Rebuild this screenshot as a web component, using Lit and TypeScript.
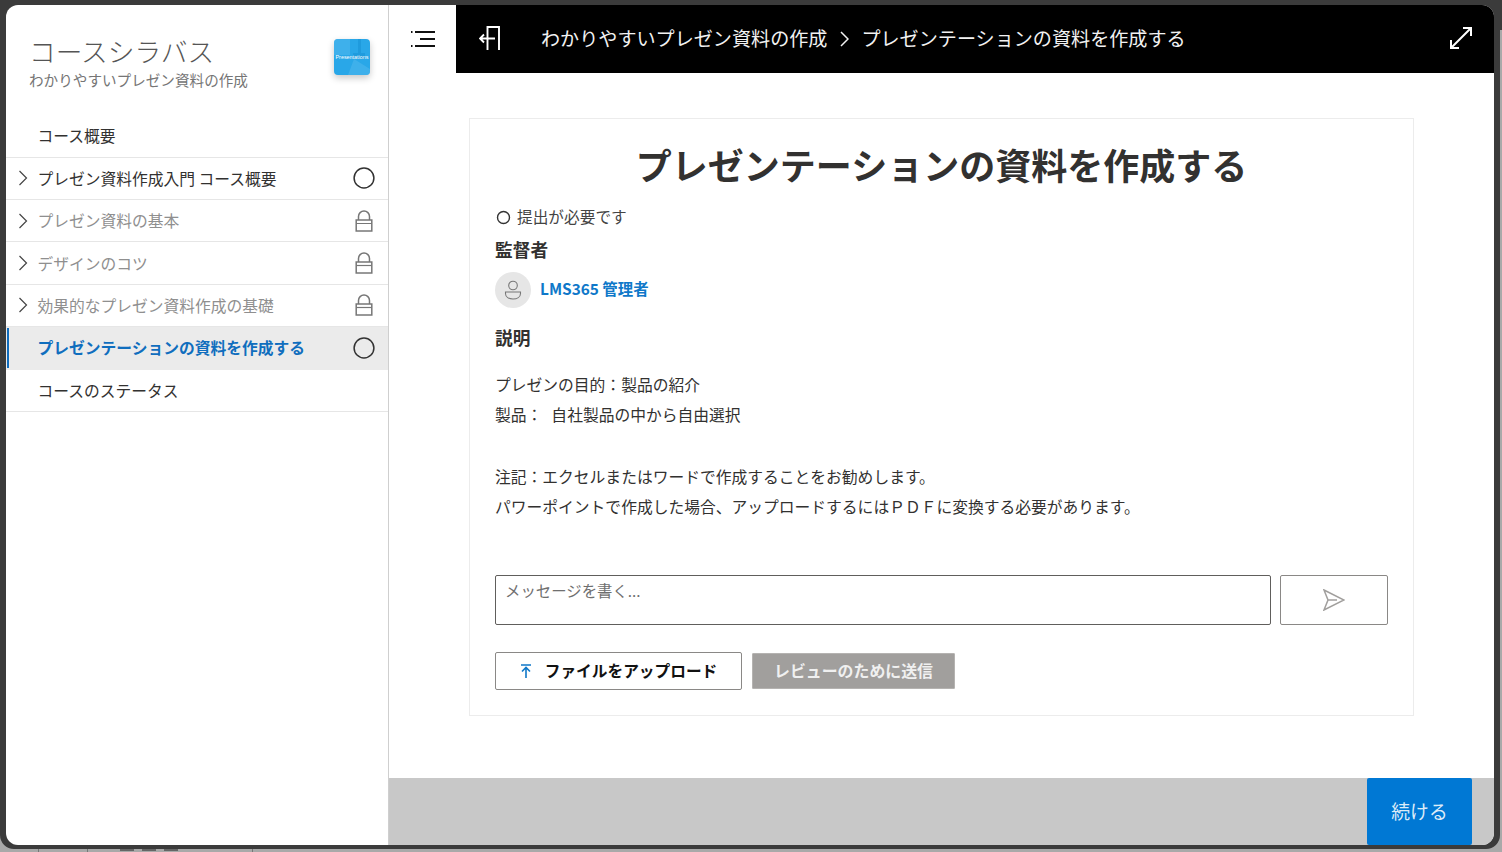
import { LitElement, html, css, svg } from "lit";
import { customElement } from "lit/decorators.js";

const chevron = html`<svg class="chev" width="10" height="16" viewBox="0 0 10 16"><path d="M1.5 1 L8.5 8 L1.5 15" fill="none" stroke="#444" stroke-width="1.2"/></svg>`;
const circle = html`<svg class="state" width="22" height="22" viewBox="0 0 22 22"><circle cx="11" cy="11" r="9.9" fill="none" stroke="#333" stroke-width="1.5"/></svg>`;
const lock = html`<svg class="state" width="22" height="22" viewBox="0 0 22 22"><path d="M5.5 10 V6.5 a5.5 5.5 0 0 1 11 0 V10" fill="none" stroke="#777" stroke-width="1.5"/><rect x="3.2" y="10" width="15.6" height="11" fill="none" stroke="#777" stroke-width="1.5"/><path d="M3.2 13.5 H18.8" stroke="#777" stroke-width="1.2"/></svg>`;

@customElement("app-root")
export class AppRoot extends LitElement {
  static styles = css`
    :host {
      display: block;
      width: 1502px;
      height: 852px;
      overflow: hidden;
      background: linear-gradient(#3b3b3b 0 30px, #a9a9a9 30px);
      font-family: "Noto Sans CJK JP", "Noto Sans", sans-serif;
      color: #323130;
    }
    * { box-sizing: border-box; }
    .frame {
      width: 1500px;
      height: 849px;
      border: solid #3b3b3b;
      border-width: 5px 6px 4px 6px;
      border-radius: 0 0 14px 14px;
      background: #3b3b3b;
    }
    .under {
      height: 3px;
      overflow: hidden;
      display: flex;
      padding-left: 38px;
    }
    .under span { border-left: 1px solid #777; height: 3px; flex: none; }
    .u1 { width: 49px; }
    .u2 { width: 165px; display: flex; gap: 8px; padding-left: 32px; }
    .u2 i { width: 14px; height: 2px; background: #666; }
    .u3 { width: 900px; }
    .win {
      width: 100%;
      height: 100%;
      border-radius: 12px;
      overflow: hidden;
      background: #fff;
      display: flex;
    }
    .side {
      width: 383px;
      flex: none;
      border-right: 1px solid #cfcfcf;
      display: flex;
      flex-direction: column;
    }
    .head {
      height: 110.2px;
      flex: none;
      padding: 27px 18px 0 23px;
      display: flex;
      justify-content: space-between;
    }
    .head h1 {
      margin: 0;
      font-size: 26.7px;
      line-height: 38px;
      font-weight: 300;
      color: #555;
    }
    .head p {
      margin: 0;
      font-size: 14.6px;
      line-height: 20px;
      color: #757575;
    }
    .thumb {
      width: 36px;
      height: 36px;
      margin-top: 7px;
      border-radius: 4px;
      background: #29a7e8;
      box-shadow: 0 3px 7px rgba(0,0,0,.22);
      overflow: hidden;
      flex: none;
    }
    .thumb svg { display: block; }
    .row {
      height: 42.4px;
      flex: none;
      border-bottom: 1px solid #e6e6e6;
      display: flex;
      align-items: center;
      padding: 0 13px 0 12px;
      font-size: 15.75px;
      color: #323130;
      position: relative;
      white-space: nowrap;
    }
    .row .chev { flex: none; margin-right: 9.5px; }
    .row .lbl { flex: 1; }
    .row.plain { padding-left: 31.5px; }
    .row.off .lbl { color: #8f8f8f; }
    .row.active {
      background: #ebebeb;
      border-bottom-color: #ebebeb;
      padding-left: 31.5px;
      color: #106ebe;
      font-weight: 700;
    }
    .row.active::before {
      content: "";
      position: absolute;
      left: 1px;
      top: 1px;
      bottom: 1px;
      width: 2px;
      background: #0f6cbd;
    }
    .main {
      flex: 1;
      min-width: 0;
      display: flex;
      flex-direction: column;
    }
    .top { height: 68px; flex: none; display: flex; }
    .burger {
      width: 67px;
      flex: none;
      display: flex;
      align-items: center;
      justify-content: center;
      padding-bottom: 1px;
    }
    .bar {
      flex: 1;
      background: #000;
      color: #f2f2f2;
      display: flex;
      align-items: center;
      padding: 0 22px 3px 23px;
      font-size: 19.1px;
      white-space: nowrap;
    }
    .crumbs { flex: 1; margin-left: 41px; display: flex; align-items: center; }
    .crumbs svg { margin: 2px 12px 0 13px; }
    .body {
      flex: 1;
      min-height: 0;
      padding: 45px 80px 0 80px;
    }
    .card {
      height: 598px;
      border: 1px solid #ececec;
      padding: 0 25px;
    }
    .card h2 {
      margin: 22px 0 0;
      font-size: 36px;
      line-height: 46px;
      font-weight: 700;
      text-align: center;
      color: #323130;
      white-space: nowrap;
    }
    .req {
      margin-top: 18px;
      display: flex;
      align-items: center;
      font-size: 15.7px;
      line-height: 24px;
      color: #444;
      padding-left: 1px;
    }
    .req svg { margin-right: 6px; }
    h3 {
      margin: 0;
      font-size: 17.7px;
      line-height: 26px;
      font-weight: 700;
      color: #323130;
    }
    .sup { margin-top: 7px; }
    .who {
      margin-top: 10px;
      display: flex;
      align-items: center;
      gap: 9px;
      font-size: 15.4px;
      font-weight: 700;
      color: #0f78c9;
    }
    .who span { padding-bottom: 4px; }
    .avatar {
      width: 36px;
      height: 36px;
      border-radius: 50%;
      background: #e6e6e6;
      display: flex;
      align-items: center;
      justify-content: center;
    }
    .desc { margin-top: 16px; }
    .text {
      margin-top: 19.5px;
      font-size: 15.78px;
      line-height: 30.7px;
      word-spacing: 1px;
      color: #323130;
      white-space: pre;
    }
    .send {
      margin-top: 51.5px;
      display: flex;
      gap: 9px;
    }
    .input {
      width: 776px;
      height: 50px;
      border: 1px solid #605e5c;
      border-radius: 2px;
      padding: 2px 9px;
      font-size: 15.4px;
      line-height: 24px;
      color: #6f6f6f;
    }
    .go {
      width: 108px;
      height: 50px;
      border: 1px solid #8a8886;
      border-radius: 2px;
      display: flex;
      align-items: center;
      justify-content: center;
    }
    .btns {
      margin-top: 27px;
      display: flex;
      align-items: center;
      gap: 10px;
    }
    .up {
      width: 247px;
      height: 38px;
      border: 1px solid #8a8886;
      border-radius: 2px;
      display: flex;
      align-items: center;
      justify-content: center;
      gap: 13px;
      font-size: 15.7px;
      font-weight: 700;
      color: #111;
    }
    .sub {
      width: 203px;
      height: 36px;
      background: #a19f9d;
      border: 1px solid #b5b3b1;
      border-radius: 1px;
      display: flex;
      align-items: center;
      justify-content: center;
      font-size: 15.9px;
      font-weight: 700;
      color: #f0f0f0;
    }
    .foot {
      height: 67px;
      flex: none;
      background: #c8c8c8;
      display: flex;
      justify-content: flex-end;
      padding-right: 22px;
    }
    .next {
      width: 105px;
      background: #0078d4;
      border-radius: 2px;
      color: #dcecf8;
      font-size: 18.8px;
      display: flex;
      align-items: center;
      justify-content: center;
      padding-bottom: 2px;
    }
  `;

  render() {
    return html`
      <div class="frame"><div class="win">
        <aside class="side">
          <div class="head">
            <div>
              <h1>コースシラバス</h1>
              <p>わかりやすいプレゼン資料の作成</p>
            </div>
            <div class="thumb">
              <svg width="36" height="36" viewBox="0 0 36 36">
                ${svg`<path d="M0 0 H16 V16 H0Z M20 20 L36 30 V36 H14Z" fill="#4cb6ec" opacity=".6"/>
                <path d="M24 0 h3 v14 h4 v6 H19 v-6 h5z" fill="#1b95d8" opacity=".7"/>
                <text x="18" y="19.5" font-size="5.4" fill="#fff" text-anchor="middle" font-family="Liberation Sans">Presentations</text>`}
              </svg>
            </div>
          </div>
          <div class="row plain"><span class="lbl">コース概要</span></div>
          <div class="row">${chevron}<span class="lbl">プレゼン資料作成入門 コース概要</span>${circle}</div>
          <div class="row off">${chevron}<span class="lbl">プレゼン資料の基本</span>${lock}</div>
          <div class="row off">${chevron}<span class="lbl">デザインのコツ</span>${lock}</div>
          <div class="row off">${chevron}<span class="lbl">効果的なプレゼン資料作成の基礎</span>${lock}</div>
          <div class="row active"><span class="lbl">プレゼンテーションの資料を作成する</span>${circle}</div>
          <div class="row plain"><span class="lbl">コースのステータス</span></div>
        </aside>
        <div class="main">
          <div class="top">
            <div class="burger">
              <svg width="24" height="16" viewBox="0 0 24 16"><path d="M0 1 h1.5 M4 1 H24 M9 8 H24 M0 15 h1.5 M4 15 H24" stroke="#111" stroke-width="1.8" fill="none"/></svg>
            </div>
            <div class="bar">
              <svg width="21" height="24" viewBox="0 0 21 24"><path d="M8.5 24 V1 H20 V24" fill="none" stroke="#fff" stroke-width="1.9"/><path d="M1 12.5 H16 M5 8.5 L1 12.5 L5 16.5" fill="none" stroke="#fff" stroke-width="1.9"/></svg>
              <div class="crumbs">
                <span>わかりやすいプレゼン資料の作成</span>
                <svg width="9" height="16" viewBox="0 0 9 16"><path d="M1 1 L8 8 L1 15" fill="none" stroke="#f2f2f2" stroke-width="1.5"/></svg>
                <span>プレゼンテーションの資料を作成する</span>
              </div>
              <svg width="22" height="22" viewBox="0 0 22 22"><path d="M1 21 L21 1 M13 1 H21 V9 M1 13 V21 H9" fill="none" stroke="#fff" stroke-width="2"/></svg>
            </div>
          </div>
          <div class="body">
            <div class="card">
              <h2>プレゼンテーションの資料を作成する</h2>
              <div class="req"><svg width="15" height="15" viewBox="0 0 15 15"><circle cx="7.5" cy="7.5" r="6" fill="none" stroke="#333" stroke-width="1.4"/></svg>提出が必要です</div>
              <h3 class="sup">監督者</h3>
              <div class="who">
                <div class="avatar"><svg width="18" height="20" viewBox="0 0 18 20"><circle cx="9" cy="5.5" r="4.3" fill="none" stroke="#777" stroke-width="1.1"/><path d="M1.5 12 H16.5 V13.5 C16.5 17 13 19 9 19 C5 19 1.5 17 1.5 13.5Z" fill="none" stroke="#777" stroke-width="1.1"/></svg></div>
                <span>LMS365 管理者</span>
              </div>
              <h3 class="desc">説明</h3>
              <div class="text">プレゼンの目的：製品の紹介
製品：  自社製品の中から自由選択

注記：エクセルまたはワードで作成することをお勧めします。
パワーポイントで作成した場合、アップロードするにはＰＤＦに変換する必要があります。</div>
              <div class="send">
                <div class="input">メッセージを書く...</div>
                <div class="go"><svg width="22" height="22" viewBox="0 0 22 22"><path d="M1 1 L21 11 L1 21 L5 11Z M5 11 H14" fill="none" stroke="#a19f9d" stroke-width="1.5" stroke-linejoin="miter"/></svg></div>
              </div>
              <div class="btns">
                <div class="up"><svg width="12" height="14" viewBox="0 0 12 14"><path d="M1 1 H11 M6 14 V4 M2 7.5 L6 3.5 L10 7.5" fill="none" stroke="#0f78c9" stroke-width="1.6"/></svg>ファイルをアップロード</div>
                <div class="sub">レビューのために送信</div>
              </div>
            </div>
          </div>
          <div class="foot"><div class="next">続ける</div></div>
        </div>
      </div></div>
      <div class="under"><span class="u1"></span><span class="u2"><i></i><i></i><i></i></span><span class="u3"></span></div>
    `;
  }
}
